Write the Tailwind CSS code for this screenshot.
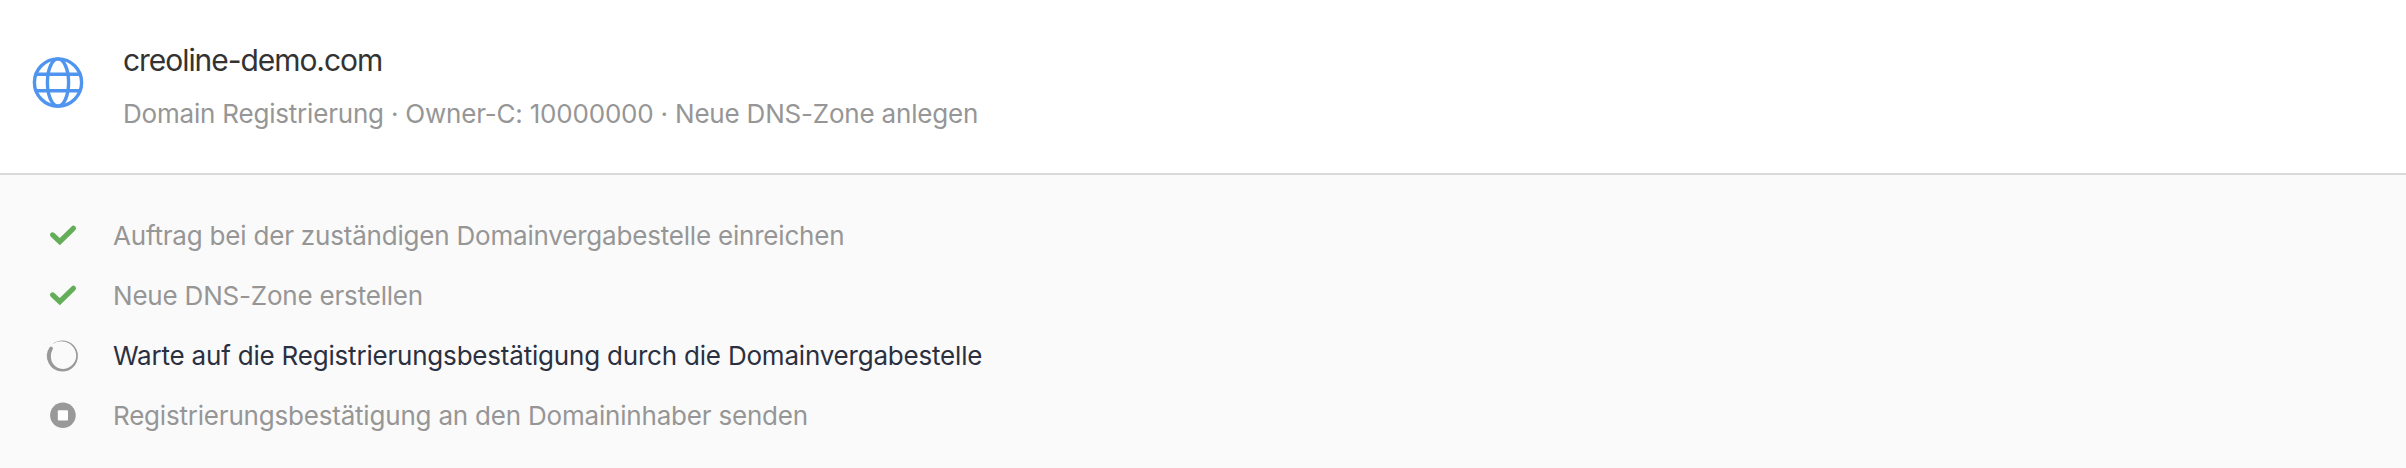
<!DOCTYPE html>
<html lang="de">

<head>
    <meta charset="UTF-8">
    <meta name="viewport" content="width=device-width, initial-scale=1.0">
    <script src="https://cdn.jsdelivr.net/npm/@tailwindcss/browser@4"></script>
    <title>creoline-demo.com</title>
</head>

<body class="bg-[#fafafa] min-h-screen font-['Inter',sans-serif] text-[26px] leading-[60px] tracking-[-0.2px] text-[#969696]">
    <!-- Header -->
    <header class="flex h-[175px] bg-white border-b-2 border-[#d9d9d9] pl-8 pt-[34px]">
        <svg class="w-[52px] h-[52px] mt-[22px] shrink-0" viewBox="0 0 52 52" fill="none" stroke="#4f95f0" stroke-width="3.4">
            <circle cx="26" cy="26.5" r="23.6" />
            <ellipse cx="26" cy="26.5" rx="10.6" ry="23.6" />
            <path d="M4 18.3h44M4 34.7h44" />
        </svg>
        <div class="ml-[39px] whitespace-nowrap">
            <h1 class="text-[30px] leading-[52px] text-[#333333] tracking-[-1.06px]">creoline-demo.com</h1>
            <p class="leading-[56px]">Domain Registrierung · Owner-C: 10000000 · Neue DNS-Zone anlegen</p>
        </div>
    </header>

    <!-- Progress steps -->
    <ul class="pl-[42px] pt-[31px] whitespace-nowrap">
        <li class="flex items-center h-[60px]">
            <svg class="w-10 h-10 shrink-0" viewBox="0 0 40 40" fill="none" stroke="#65ae59" stroke-width="5.2" stroke-linecap="round">
                <path d="M10.6 18.9L17.8 25.7L31.4 12.3" />
            </svg>
            <span class="ml-[31px]">Auftrag bei der zuständigen Domainvergabestelle einreichen</span>
        </li>
        <li class="flex items-center h-[60px]">
            <svg class="w-10 h-10 shrink-0" viewBox="0 0 40 40" fill="none" stroke="#65ae59" stroke-width="5.2" stroke-linecap="round">
                <path d="M10.6 18.9L17.8 25.7L31.4 12.3" />
            </svg>
            <span class="ml-[31px]">Neue DNS-Zone erstellen</span>
        </li>
        <li class="flex items-center h-[60px] text-[#2b3040]">
            <svg class="w-10 h-10 shrink-0" viewBox="-20.4 -20 40 40" fill="#999999">
                <path d="M-12.8 -8.7A15.5 15.5 0 0 0 0 15.5A15.5 15.5 0 0 0 15.5 0A15.5 15.5 0 0 0 0 -15.5A15.5 15.5 0 0 0 -10 -11.8A15.2 15.2 0 0 1 0 -14.6A14.4 14.4 0 0 1 13.8 0A13.5 13.5 0 0 1 0 12.9A12.2 12.2 0 0 1 -11.5 0A12 12 0 0 1 -9.9 -6.2A1.7 1.7 0 0 0 -12.8 -8.7Z" />
            </svg>
            <span class="ml-[31px]">Warte auf die Registrierungsbestätigung durch die Domainvergabestelle</span>
        </li>
        <li class="flex items-center h-[60px]">
            <svg class="w-10 h-10 shrink-0" viewBox="0 0 40 40">
                <circle cx="20.9" cy="19.3" r="12.8" fill="#999999" />
                <rect x="15.8" y="14.2" width="10.2" height="10.2" rx="1" fill="#ffffff" />
            </svg>
            <span class="ml-[31px]">Registrierungsbestätigung an den Domaininhaber senden</span>
        </li>
    </ul>
</body>

</html>
